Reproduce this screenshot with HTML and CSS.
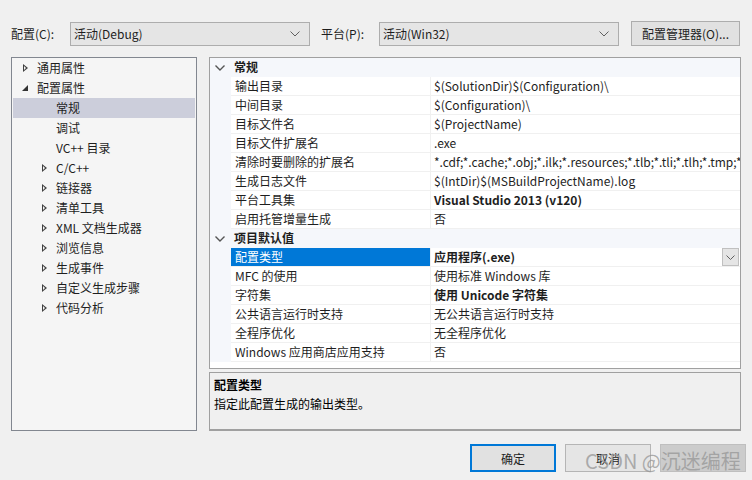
FILE: index.html
```html
<!DOCTYPE html>
<html lang="zh-CN">
<head>
<meta charset="utf-8">
<link rel="stylesheet" href="styles.css">
</head>
<body>
<div class="dialog">
  <div class="topbar">
    <span class="lbl lbl-config">配置(C):</span>
    <div class="combo combo-config"><span>活动(Debug)</span><svg class="chev" width="10" height="6" viewBox="0 0 10 6"><path d="M0.5 0.5 L5 5 L9.5 0.5" fill="none" stroke="#606060" stroke-width="1"/></svg></div>
    <span class="lbl lbl-plat">平台(P):</span>
    <div class="combo combo-plat"><span>活动(Win32)</span><svg class="chev" width="10" height="6" viewBox="0 0 10 6"><path d="M0.5 0.5 L5 5 L9.5 0.5" fill="none" stroke="#606060" stroke-width="1"/></svg></div>
    <div class="btn btn-mgr">配置管理器(O)...</div>
  </div>

  <div class="main">
    <div class="tree">
      <div class="node l1"><span class="arr closed"></span>通用属性</div>
      <div class="node l1"><span class="arr open"></span>配置属性</div>
      <div class="node l2 sel"><span class="arr none"></span>常规</div>
      <div class="node l2"><span class="arr none"></span>调试</div>
      <div class="node l2"><span class="arr none"></span>VC++ 目录</div>
      <div class="node l2"><span class="arr closed"></span>C/C++</div>
      <div class="node l2"><span class="arr closed"></span>链接器</div>
      <div class="node l2"><span class="arr closed"></span>清单工具</div>
      <div class="node l2"><span class="arr closed"></span>XML 文档生成器</div>
      <div class="node l2"><span class="arr closed"></span>浏览信息</div>
      <div class="node l2"><span class="arr closed"></span>生成事件</div>
      <div class="node l2"><span class="arr closed"></span>自定义生成步骤</div>
      <div class="node l2"><span class="arr closed"></span>代码分析</div>
    </div>

    <div class="right">
      <div class="grid">
        <div class="cat"><span class="gut"><svg width="10" height="6" viewBox="0 0 10 6"><path d="M0.5 0.5 L5 5 L9.5 0.5" fill="none" stroke="#555" stroke-width="1.4"/></svg></span><span class="cat-name">常规</span></div>
        <div class="row"><span class="gut"></span><span class="name">输出目录</span><span class="val">$(SolutionDir)$(Configuration)\</span></div>
        <div class="row"><span class="gut"></span><span class="name">中间目录</span><span class="val">$(Configuration)\</span></div>
        <div class="row"><span class="gut"></span><span class="name">目标文件名</span><span class="val">$(ProjectName)</span></div>
        <div class="row"><span class="gut"></span><span class="name">目标文件扩展名</span><span class="val">.exe</span></div>
        <div class="row"><span class="gut"></span><span class="name">清除时要删除的扩展名</span><span class="val">*.cdf;*.cache;*.obj;*.ilk;*.resources;*.tlb;*.tli;*.tlh;*.tmp;*.rsp;*.pgc;*.pgd;*.meta</span></div>
        <div class="row"><span class="gut"></span><span class="name">生成日志文件</span><span class="val">$(IntDir)$(MSBuildProjectName).log</span></div>
        <div class="row"><span class="gut"></span><span class="name">平台工具集</span><span class="val b">Visual Studio 2013 (v120)</span></div>
        <div class="row"><span class="gut"></span><span class="name">启用托管增量生成</span><span class="val">否</span></div>
        <div class="cat"><span class="gut"><svg width="10" height="6" viewBox="0 0 10 6"><path d="M0.5 0.5 L5 5 L9.5 0.5" fill="none" stroke="#555" stroke-width="1.4"/></svg></span><span class="cat-name">项目默认值</span></div>
        <div class="row"><span class="gut"></span><span class="name selname">配置类型</span><span class="val b withdd">应用程序(.exe)<span class="dd"><svg width="9" height="5" viewBox="0 0 9 5"><path d="M0.5 0.5 L4.5 4.5 L8.5 0.5" fill="none" stroke="#606060" stroke-width="1"/></svg></span></span></div>
        <div class="row"><span class="gut"></span><span class="name">MFC 的使用</span><span class="val">使用标准 Windows 库</span></div>
        <div class="row"><span class="gut"></span><span class="name">字符集</span><span class="val b">使用 Unicode 字符集</span></div>
        <div class="row"><span class="gut"></span><span class="name">公共语言运行时支持</span><span class="val">无公共语言运行时支持</span></div>
        <div class="row"><span class="gut"></span><span class="name">全程序优化</span><span class="val">无全程序优化</span></div>
        <div class="row"><span class="gut"></span><span class="name">Windows 应用商店应用支持</span><span class="val">否</span></div>
      </div>
      <div class="desc">
        <div class="desc-title">配置类型</div>
        <div class="desc-text">指定此配置生成的输出类型。</div>
      </div>
    </div>
  </div>

  <div class="buttons">
    <div class="btn btn-ok">确定</div>
    <div class="btn btn-cancel">取消</div>
    <div class="btn btn-apply"></div>
  </div>
  <div class="watermark">CSDN @沉迷编程</div>
</div>
</body>
</html>
```

FILE: styles.css
```css
html, body {
  margin: 0;
  padding: 0;
  background: #f0f0f0;
}
body {
  font-family: "Noto Sans CJK SC", "Noto Sans", sans-serif;
  font-size: 12px;
  color: #1e1e1e;
  width: 752px;
  height: 480px;
  overflow: hidden;
}
.dialog {
  position: relative;
  width: 752px;
  height: 480px;
}
.topbar {
  display: flex;
  align-items: center;
  padding: 21px 0 0 11px;
  height: 25px;
}
.lbl { line-height: 24px; }
.lbl-config { width: 59px; }
.lbl-plat { width: 58px; margin-left: 11px; }
.combo {
  box-sizing: border-box;
  height: 24px;
  background: #e5e5e5;
  border: 1px solid #adadad;
  display: flex;
  align-items: center;
  justify-content: space-between;
  padding: 0 9px 0 3px;
}
.combo-config { width: 240px; }
.combo-plat { width: 240px; }
.btn {
  box-sizing: border-box;
  background: #e1e1e1;
  border: 1px solid #adadad;
  display: flex;
  align-items: center;
  justify-content: center;
}
.btn-mgr {
  width: 109px;
  height: 25px;
  margin-left: 12px;
}
.main {
  display: flex;
  margin-top: 11px;
  padding-left: 11px;
}
.tree {
  box-sizing: border-box;
  width: 186px;
  height: 374px;
  background: #f5f5f5;
  border: 1px solid #828790;
  padding: 0 1px;
}
.node {
  height: 20px;
  line-height: 20px;
  display: flex;
  align-items: center;
  white-space: nowrap;
}
.node.l1 { padding-left: 7px; }
.node.l2 { padding-left: 26px; }
.node.sel { background: #cccedb; }
.arr {
  display: inline-block;
  width: 17px;
  height: 20px;
  position: relative;
  flex: none;
}
.arr.closed::before {
  content: "";
  position: absolute;
  left: 3px;
  top: 6px;
  width: 0;
  height: 0;
  border-top: 4px solid transparent;
  border-bottom: 4px solid transparent;
  border-left: 5px solid #404040;
}
.arr.closed::after {
  content: "";
  position: absolute;
  left: 4px;
  top: 8px;
  width: 0;
  height: 0;
  border-top: 2px solid transparent;
  border-bottom: 2px solid transparent;
  border-left: 2.5px solid #f5f5f5;
}
.arr.open::before {
  content: "";
  position: absolute;
  left: 2px;
  top: 7px;
  width: 0;
  height: 0;
  border-left: 6px solid transparent;
  border-bottom: 6px solid #333;
}
.right {
  margin-left: 12px;
  width: 532px;
  display: flex;
  flex-direction: column;
}
.grid {
  box-sizing: border-box;
  height: 312px;
  border: 1px solid #a0a0a0;
  background: #ffffff;
  overflow: hidden;
  width: 532px;
}
.cat, .row {
  display: flex;
  height: 19px;
  line-height: 18px;
  white-space: nowrap;
}
.gut {
  width: 21px;
  flex: none;
  background: #f5f7fb;
  display: flex;
  align-items: center;
  justify-content: center;
  padding-right: 2px;
  box-sizing: border-box;
}
.cat {
  background: #f5f7fb;
}
.cat-name {
  font-weight: bold;
  padding-left: 3px;
  color: #1e1e1e;
}
.name {
  box-sizing: border-box;
  width: 200px;
  flex: none;
  padding-left: 4px;
  border-bottom: 1px solid #f0f0f0;
  border-right: 1px solid #f0f0f0;
  overflow: hidden;
}
.name.selname {
  background: #0078d7;
  color: #ffffff;
}
.val {
  flex: 1;
  padding-left: 3px;
  border-bottom: 1px solid #f0f0f0;
  overflow: hidden;
  position: relative;
}
.b { font-weight: bold; }
.dd {
  position: absolute;
  right: 1px;
  top: 0;
  box-sizing: border-box;
  width: 17px;
  height: 18px;
  background: #e5e5e5;
  border: 1px solid #c0c0c0;
  display: flex;
  align-items: center;
  justify-content: center;
}
.desc {
  box-sizing: border-box;
  margin-top: 3px;
  height: 59px;
  border: 1px solid #a0a0a0;
  border-bottom: 2px solid #a0a0a0;
  background: #f0f0f0;
  padding: 2px 4px;
}
.desc-title {
  font-weight: bold;
  line-height: 19px;
  color: #000;
}
.desc-text {
  line-height: 19px;
  color: #000;
}
.buttons {
  display: flex;
  margin-top: 13px;
  padding-left: 470px;
  gap: 9px;
}
.btn-ok, .btn-cancel, .btn-apply {
  width: 86px;
  height: 28px;
}
.btn-ok {
  border: 2px solid #0078d7;
  background: #e1e1e1;
}
.btn-cancel {
  background: #e5e5e5;
  border-color: #b5b5b5;
}
.btn-apply {
  background: #cccccc;
  border-color: #bfbfbf;
}
.watermark {
  position: absolute;
  left: 585px;
  top: 447px;
  font-size: 20px;
  line-height: 28px;
  color: rgba(150, 150, 150, 0.75);
  white-space: nowrap;
}
```
